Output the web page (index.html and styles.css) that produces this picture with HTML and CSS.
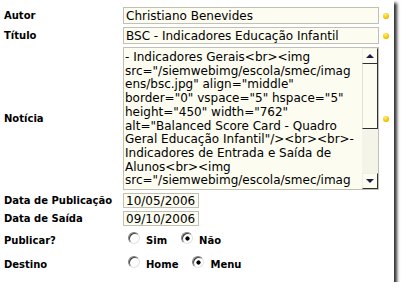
FILE: index.html
```html
<!DOCTYPE html>
<html>

<head>
  <title>Cadastro de Notícia</title>
  <link rel="stylesheet" href="styles.css">
</head>

<body>
  <div class="window">
    <form class="form">
      <label class="label">Autor</label>
      <input type="text" class="text" value="Christiano Benevides">
      <span class="req"></span>

      <label class="label">Título</label>
      <input type="text" class="text" value="BSC - Indicadores Educação Infantil">
      <span class="req"></span>

      <label class="label">Notícia</label>
      <div class="memo">
        <div class="memo-text">- Indicadores Gerais&lt;br&gt;&lt;img
src="/siemwebimg/escola/smec/imag
ens/bsc.jpg" align="middle"
border="0" vspace="5" hspace="5"
height="450" width="762"
alt="Balanced Score Card - Quadro
Geral Educação Infantil"/&gt;&lt;br&gt;&lt;br&gt;-
Indicadores de Entrada e Saída de
Alunos&lt;br&gt;&lt;img
src="/siemwebimg/escola/smec/imag</div>
        <div class="scrollbar">
          <div class="sb-btn"><span class="arrow-up"></span></div>
          <div class="sb-thumb"></div>
          <div class="sb-track"></div>
          <div class="sb-btn"><span class="arrow-down"></span></div>
        </div>
      </div>
      <span class="req"></span>

      <label class="label">Data de Publicação</label>
      <input type="text" class="text date" value="10/05/2006">
      <span></span>

      <label class="label">Data de Saída</label>
      <input type="text" class="text date" value="09/10/2006">
      <span></span>

      <label class="label">Publicar?</label>
      <div class="choices">
        <label class="option"><input type="radio" name="publicar" class="radio">Sim</label>
        <label class="option"><input type="radio" name="publicar" class="radio" checked>Não</label>
      </div>

      <label class="label">Destino</label>
      <div class="choices">
        <label class="option"><input type="radio" name="destino" class="radio">Home</label>
        <label class="option"><input type="radio" name="destino" class="radio" checked>Menu</label>
      </div>
    </form>
  </div>
</body>

</html>
```

FILE: styles.css
```css
body {
  margin: 0;
  padding: 0;
  background-color: #fff;
  font-family: "DejaVu Sans", Verdana, sans-serif;
}

.window {
  width: 394px;
  height: 282px;
  background-color: #fff;
  box-shadow: 3px 3px 3px #333;
}

.form {
  display: grid;
  grid-template-columns: 123px 256px 15px;
  grid-template-rows: 17px 17px 143px 15px 15px 22px 20px;
  row-gap: 3px;
  padding-top: 7px;
}

.label {
  align-self: center;
  padding-left: 4px;
  font-size: 10px;
  font-weight: bold;
  color: #000;
}

.text {
  margin: 0;
  padding: 0 2px;
  width: 100%;
  height: 100%;
  box-sizing: border-box;
  border: 1px solid #c0c0b4;
  background-color: #fcfcf0;
  font-family: "DejaVu Sans", Verdana, sans-serif;
  font-size: 12px;
  color: #000;
  outline: none;
}

.date {
  width: 76px;
}

.req {
  align-self: center;
  justify-self: start;
  margin-left: 4px;
  width: 6px;
  height: 6px;
  border-radius: 50%;
  background: radial-gradient(circle at 40% 30%, #fff27a, #f8c400 55%, #e89400);
}

.memo {
  display: flex;
  border: 1px solid #c0c0b4;
  background-color: #fcfcf0;
  overflow: hidden;
}

.memo-text {
  flex: 1;
  padding: 3px 1px 0 1px;
  white-space: pre;
  font-size: 12px;
  line-height: 13.7px;
  color: #000;
  overflow: hidden;
}

.scrollbar {
  width: 16px;
  display: flex;
  flex-direction: column;
}

.sb-btn {
  height: 16px;
  box-sizing: border-box;
  border-top: 1px solid #f0f0e4;
  border-left: 1px solid #f0f0e4;
  border-right: 1px solid #303030;
  border-bottom: 1px solid #303030;
  background-color: #fcfcf0;
  display: flex;
  align-items: center;
  justify-content: center;
}

.arrow-up {
  border-left: 4px solid transparent;
  border-right: 4px solid transparent;
  border-bottom: 4px solid #1c1c48;
}

.arrow-down {
  border-left: 4px solid transparent;
  border-right: 4px solid transparent;
  border-top: 4px solid #1c1c48;
}

.sb-thumb {
  height: 65px;
  box-sizing: border-box;
  border-left: 1px solid #e0e0d4;
  border-right: 1px solid #303030;
  border-bottom: 1px solid #303030;
  background-color: #fcfcf0;
}

.sb-track {
  flex: 1;
  background-color: #f4f4e8;
}

.choices {
  grid-column: 2 / 4;
  display: flex;
  align-items: center;
  gap: 14px;
  padding-left: 5px;
}

.option {
  display: flex;
  align-items: center;
  gap: 6px;
  font-size: 10px;
  font-weight: bold;
}

.radio {
  appearance: none;
  -webkit-appearance: none;
  margin: 0;
  width: 12px;
  height: 12px;
  border-radius: 50%;
  border: 1px solid;
  border-color: #808080 #e4e4e4 #e4e4e4 #808080;
  box-shadow: inset 1px 1px 0 #404040;
  background-color: #fff;
  position: relative;
  top: -2px;
}

.radio:checked {
  background: radial-gradient(circle at 55% 55%, #000 1.8px, #fff 2.4px);
}
```
